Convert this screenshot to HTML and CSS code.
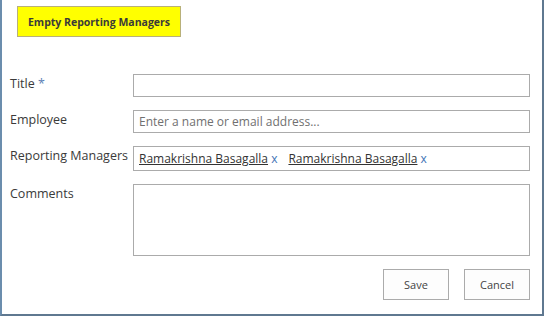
FILE: index.html
```html
<!DOCTYPE html>
<html>
<head>
<meta charset="utf-8">
<link rel="stylesheet" href="styles.css">
</head>
<body>
<div class="frame">
  <div class="top">
    <button class="yellow-btn">Empty Reporting Managers</button>
  </div>
  <div class="form">
    <div class="label">Title <span class="req">*</span></div>
    <div class="field f-title"></div>
    <div class="label">Employee</div>
    <div class="field f-emp"><span class="ph">Enter a name or email address...</span></div>
    <div class="label">Reporting Managers</div>
    <div class="field f-rm">
      <span class="person"><span class="name">Ramakrishna Basagalla</span> <span class="x">x</span></span>
      <span class="person"><span class="name">Ramakrishna Basagalla</span> <span class="x">x</span></span>
    </div>
    <div class="label">Comments</div>
    <div class="field f-com"></div>
  </div>
  <div class="actions">
    <button class="btn">Save</button>
    <button class="btn">Cancel</button>
  </div>
</div>
</body>
</html>
```
FILE: styles.css
```css
html, body {
  margin: 0;
  padding: 0;
  background: #ffffff;
}
.frame {
  box-sizing: border-box;
  width: 544px;
  height: 316px;
  border-left: 2px solid #6b8dad;
  border-right: 2px solid #5f7890;
  border-bottom: 2px solid #5f7890;
  padding: 6px 12px 0 8px;
  font-family: "Open Sans", "Noto Sans", sans-serif;
  font-size: 12px;
  color: #333333;
}
.top {
  padding-left: 7px;
}
.yellow-btn {
  width: 164px;
  height: 31px;
  background: #ffff00;
  border: 1px solid #b8b07a;
  font-family: "Open Sans", sans-serif;
  font-size: 10.5px;
  font-weight: bold;
  color: #3a3a3a;
  padding: 0;
  margin: 0;
}
.form {
  display: grid;
  grid-template-columns: 123px 397px;
  row-gap: 13px;
  margin-top: 37px;
}
.label {
  padding-top: 2px;
  line-height: 16px;
  font-size: 12.5px;
  white-space: nowrap;
  color: #3a3a3a;
}
.req {
  color: #5b7fb5;
}
.field {
  box-sizing: border-box;
  border: 1px solid #ababab;
  height: 23px;
  padding: 0 5px;
  display: flex;
  align-items: center;
}
.f-rm {
  height: 25px;
  gap: 11px;
}
.f-com {
  height: 72px;
}
.ph {
  color: #707070;
}
.name {
  text-decoration: underline;
  color: #333333;
}
.x {
  color: #3f74b6;
}
.actions {
  display: flex;
  justify-content: flex-end;
  gap: 15px;
  margin-top: 13px;
}
.btn {
  width: 66px;
  height: 31px;
  background: #fdfdfd;
  border: 1px solid #ababab;
  font-family: "Open Sans", sans-serif;
  font-size: 11px;
  color: #444444;
  padding: 0;
  margin: 0;
}
```
